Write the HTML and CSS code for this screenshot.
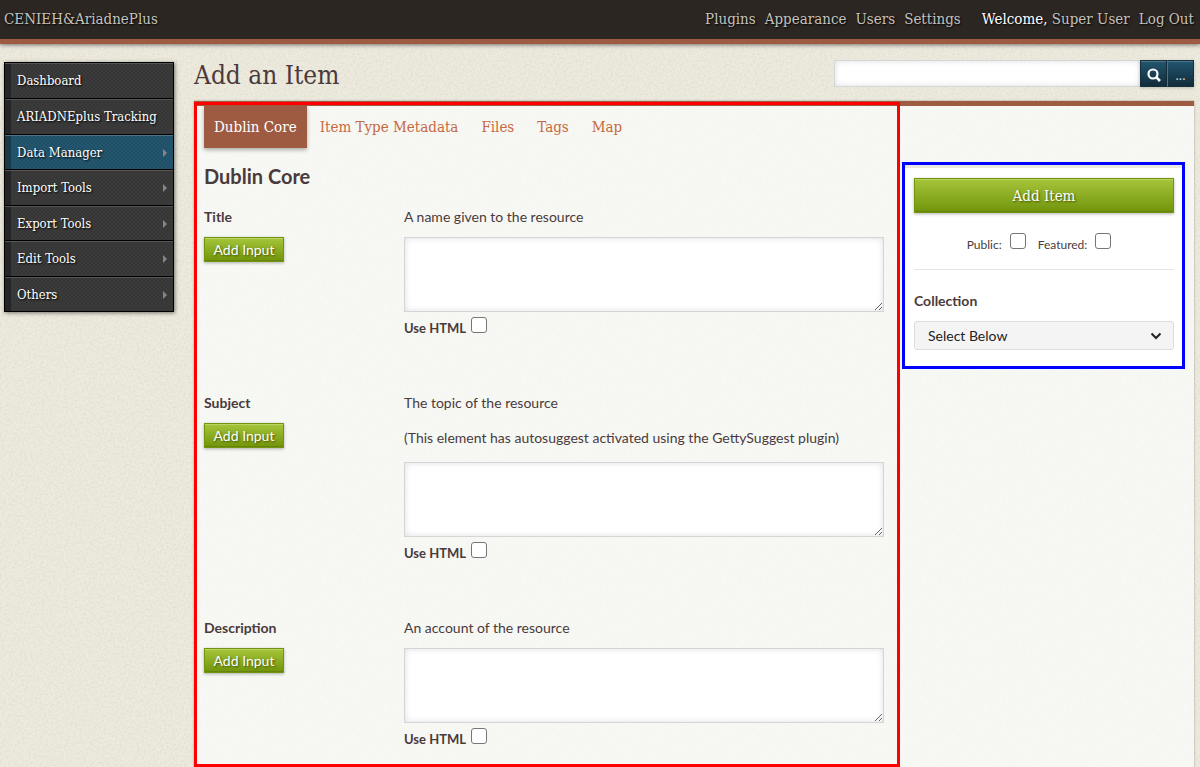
FILE: index.html
```html
<!DOCTYPE html>
<html lang="en">
<head>
<meta charset="utf-8">
<title>Add an Item</title>
<link rel="stylesheet" href="styles.css">
</head>
<body>
<header class="topbar">
  <a class="site-title" href="#">CENIEH&amp;AriadnePlus</a>
  <nav class="global-nav" aria-label="Global">
    <a href="#">Plugins</a>
    <a href="#">Appearance</a>
    <a href="#">Users</a>
    <a href="#">Settings</a>
  </nav>
  <div class="user-nav">
    <span class="welcome">Welcome, <a href="#">Super User</a></span>
    <a href="#">Log Out</a>
  </div>
</header>

<div class="page">
  <nav class="side-nav" aria-label="Content">
    <a href="#">Dashboard</a>
    <a href="#">ARIADNEplus Tracking</a>
    <a class="current has-children" href="#">Data Manager</a>
    <a class="has-children" href="#">Import Tools</a>
    <a class="has-children" href="#">Export Tools</a>
    <a class="has-children" href="#">Edit Tools</a>
    <a class="has-children" href="#">Others</a>
  </nav>

  <main class="main">
    <div class="title-row">
      <h1>Add an Item</h1>
      <form class="search">
        <input type="text" aria-label="Search">
        <button type="button" aria-label="Submit search">
          <svg width="14" height="14" viewBox="0 0 14 14" fill="none" stroke="#fff"><circle cx="6" cy="6" r="4.5" stroke-width="2.2"/><path d="M9.2 9.2 13 13" stroke-width="2.6"/></svg>
        </button>
        <button type="button" class="more" aria-label="Search options">...</button>
      </form>
    </div>

    <div class="content">
      <section class="editor">
        <nav class="tabs" aria-label="Sections">
          <a class="active" href="#">Dublin Core</a>
          <a href="#">Item Type Metadata</a>
          <a href="#">Files</a>
          <a href="#">Tags</a>
          <a href="#">Map</a>
        </nav>
        <h2>Dublin Core</h2>

        <div class="field">
          <div class="field-label">
            <label for="title">Title</label>
            <button type="button" class="green">Add Input</button>
          </div>
          <div class="field-input">
            <p>A name given to the resource</p>
            <textarea id="title"></textarea>
            <label class="use-html">Use HTML <input type="checkbox"></label>
          </div>
        </div>

        <div class="field">
          <div class="field-label">
            <label for="subject">Subject</label>
            <button type="button" class="green">Add Input</button>
          </div>
          <div class="field-input">
            <p>The topic of the resource</p>
            <p class="comment">(This element has autosuggest activated using the GettySuggest plugin)</p>
            <textarea id="subject"></textarea>
            <label class="use-html">Use HTML <input type="checkbox"></label>
          </div>
        </div>

        <div class="field">
          <div class="field-label">
            <label for="description">Description</label>
            <button type="button" class="green">Add Input</button>
          </div>
          <div class="field-input">
            <p>An account of the resource</p>
            <textarea id="description"></textarea>
            <label class="use-html">Use HTML <input type="checkbox"></label>
          </div>
        </div>
      </section>

      <aside class="save-panel">
        <button type="button" class="green save">Add Item</button>
        <div class="flags">
          <label>Public: <input type="checkbox"></label>
          <label>Featured: <input type="checkbox"></label>
        </div>
        <label class="collection" for="collection">Collection</label>
        <div class="select-wrap">
          <select id="collection"><option>Select Below</option></select>
          <svg width="12" height="8" viewBox="0 0 12 8" fill="none" stroke="#222" stroke-width="2"><path d="M1.5 1.5 6 6l4.500-4.500"/></svg>
        </div>
      </aside>
    </div>
  </main>
</div>
</body>
</html>
```
FILE: styles.css
```css
* {
  box-sizing: border-box;
}

body {
  display: flex;
  flex-direction: column;
  min-height: 100vh;
  margin: 0;
  color: #4a3a3c;
  font: 14px/20px Lato, sans-serif;
  background-color: #edebdf;
  background-image: url("data:image/svg+xml,%3Csvg xmlns='http://www.w3.org/2000/svg' width='200' height='200'%3E%3Cfilter id='n' x='0' y='0' width='1' height='1'%3E%3CfeTurbulence type='fractalNoise' baseFrequency='.45' numOctaves='3' stitchTiles='stitch'/%3E%3CfeColorMatrix values='0 0 0 0 .5 0 0 0 0 .45 0 0 0 0 .3 .6 0 0 0 -.22'/%3E%3C/filter%3E%3Crect width='200' height='200' filter='url(%23n)' opacity='.7'/%3E%3C/svg%3E");
}

a {
  text-decoration: none;
}

h1,
h2,
p {
  margin: 0;
}

.topbar,
.side-nav,
h1,
.tabs,
.save {
  font-family: "DejaVu Serif Condensed", "DejaVu Serif", serif;
}

.topbar {
  display: flex;
  height: 44px;
  padding: 0 6px 0 4px;
  border-bottom: 5px solid #9f5b42;
  background: #2b2622;
  box-shadow: 0 1px 4px rgba(0, 0, 0, .5);
  font-size: 15px;
  line-height: 38px;
  text-shadow: 1px 1px 2px #000;
}

.topbar a {
  color: #c4c2be;
}

.global-nav,
.user-nav {
  display: flex;
  gap: 9px;
}

.global-nav {
  margin-left: auto;
}

.user-nav {
  margin-left: 21px;
}

.welcome {
  color: #fff;
}

.page {
  display: flex;
  flex: 1;
  gap: 20px;
  padding: 0 6px 0 4px;
}

.side-nav {
  display: flex;
  flex: none;
  flex-direction: column;
  align-self: flex-start;
  width: 170px;
  margin-top: 18px;
  border: 1px solid #000;
  box-shadow: 1px 1px 4px rgba(0, 0, 0, .5);
  font-size: 13px;
  line-height: 34px;
  text-shadow: 1px 1px 2px #000;
}

.side-nav a {
  display: flex;
  align-items: center;
  justify-content: space-between;
  padding: 0 6px 0 12px;
  border-top: 1px solid #555;
  color: #fff;
  background:
    linear-gradient(90deg, #252525 6px, transparent 6px),
    repeating-conic-gradient(#3b3b3b 0 25%, #363636 0 50%) 0 0 / 4px 4px;
}

.side-nav a + a {
  box-shadow: 0 -1px #000;
  margin-top: 1px;
}

.side-nav .current {
  border-top-color: #4c7589;
  background:
    linear-gradient(90deg, #1b3a48 6px, transparent 6px),
    repeating-conic-gradient(#24566d 0 25%, #205067 0 50%) 0 0 / 4px 4px;
}

.side-nav .has-children {
  line-height: 33px;
}

.side-nav .has-children:nth-child(even) {
  line-height: 34px;
}

.has-children::after {
  content: "";
  border: 4px solid transparent;
  border-right: 0;
  border-left-color: #858585;
}

.main {
  display: flex;
  flex: 1;
  flex-direction: column;
}

.title-row {
  display: flex;
  justify-content: space-between;
  height: 57px;
  padding-top: 16px;
}

h1 {
  font-size: 26px;
  font-weight: 400;
  line-height: 30px;
}

.search {
  display: flex;
  width: 360px;
  height: 27px;
}

.search input {
  flex: 1;
  min-width: 0;
  border: 1px solid #d6d6d6;
  border-right: 0;
  background: #fff;
  box-shadow: inset 0 0 6px #ddd;
}

.search button {
  display: flex;
  align-items: center;
  justify-content: center;
  width: 27px;
  padding: 3px 0 0;
  border: 1px solid #14303e;
  color: #c4ced2;
  background: linear-gradient(#225670, #112b39);
  box-shadow: inset 0 1px #4e7385, 0 1px 3px rgba(0, 0, 0, .2);
  font: 14px/20px Lato, sans-serif;
}

.search .more {
  border-left-color: #547381;
}

.content {
  display: flex;
  flex: 1;
  gap: 2px;
  padding-right: 10px;
  border-top: 5px solid #9f5b42;
  background: rgba(251, 254, 252, .72);
  box-shadow: 0 0 2px rgba(0, 0, 0, .35);
}

.editor {
  position: relative;
  flex: 1;
  padding: 0 16px 10px 10px;
}

.editor::after,
.save-panel::after {
  content: "";
  position: absolute;
  inset: -4px 0 0 0;
  border: 3px solid #f00;
  pointer-events: none;
}

.tabs {
  display: flex;
  gap: 3px;
  font-size: 15px;
  line-height: 42px;
}

.tabs a {
  padding: 0 10px;
  color: #c76941;
}

.tabs .active {
  color: #fff;
  background: #9f5b42;
  box-shadow: 0 2px 4px rgba(0, 0, 0, .3);
}

h2 {
  margin: 13px 0 16px;
  font-size: 20px;
  line-height: 30px;
}

.field {
  display: grid;
  grid-template-columns: 200px 1fr;
  margin-bottom: 54px;
}

.field:last-child {
  margin-bottom: 0;
}

.field-label {
  display: flex;
  flex-direction: column;
  align-items: flex-start;
  gap: 10px;
  font-weight: 700;
}

.field-input .comment {
  margin: 15px 0 14px;
}

.green {
  width: 80px;
  height: 25px;
  padding: 0;
  border: 1px solid #749410;
  color: #fff;
  background: linear-gradient(#a5c63b, #72940a);
  box-shadow: inset 0 1px #bbd468, inset 0 -1px #65850e, 0 1px 3px rgba(0, 0, 0, .3);
  font: 14px/22px Lato, sans-serif;
  text-shadow: 1px 1px 2px #3f5500;
}

textarea {
  display: block;
  width: 100%;
  height: 75px;
  margin-top: 10px;
  border: 1px solid #d5d5d5;
  background: #fff;
  box-shadow: inset 0 0 6px #ddd;
  resize: vertical;
}

.use-html {
  display: flex;
  gap: 5px;
  height: 22px;
  margin-top: 5px;
  font-size: 13px;
  font-weight: 700;
  line-height: 22px;
}

input[type="checkbox"] {
  appearance: none;
  width: 16px;
  height: 16px;
  margin: 0;
  border: 1px solid #767676;
  border-radius: 3px;
  background: #fff;
}

.save-panel {
  position: relative;
  flex: none;
  align-self: flex-start;
  width: 282px;
  margin-top: 58px;
  padding: 10px 10px 18px 12px;
  border-top: 4px solid #ebe9dd;
  background: #fff;
}

.save-panel::after {
  inset: -6px -1px -1px 0;
  border-color: #00f;
}

.save {
  width: 100%;
  height: 35px;
  font-family: "DejaVu Serif Condensed", "DejaVu Serif", serif;
  font-size: 15px;
}

.flags {
  display: flex;
  justify-content: center;
  gap: 12px;
  margin-top: 20px;
  padding: 0 10px 20px 0;
  border-bottom: 1px solid #e5e5e5;
  font-size: 12px;
}

.flags label {
  display: flex;
  gap: 8px;
  height: 16px;
  line-height: 23px;
}

.collection {
  display: block;
  margin: 21px 0 10px;
  font-weight: 700;
}

.select-wrap {
  display: grid;
  align-items: center;
}

.select-wrap > * {
  grid-area: 1 / 1;
}

.select-wrap svg {
  justify-self: end;
  margin-right: 12px;
  pointer-events: none;
}

select {
  appearance: none;
  width: 100%;
  height: 29px;
  padding: 0 13px;
  border: 1px solid #ddd;
  border-radius: 3px;
  color: #222;
  background: #f4f4f4;
  font: 14px/20px Lato, sans-serif;
}
```
